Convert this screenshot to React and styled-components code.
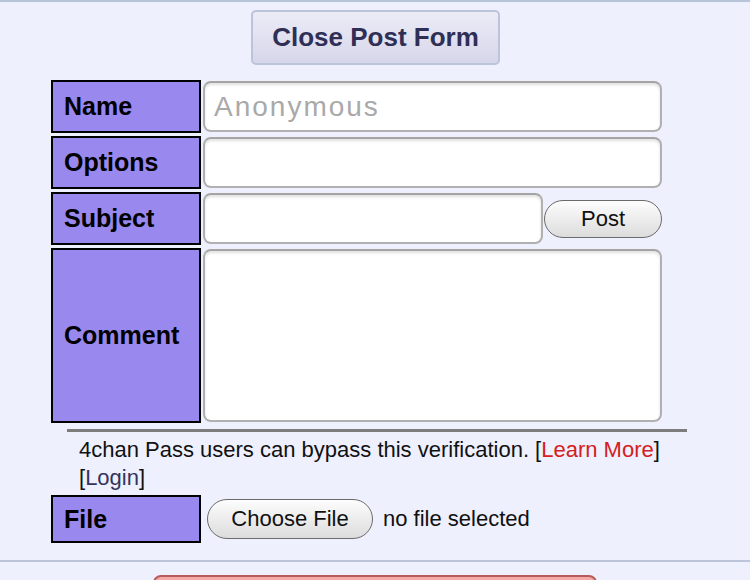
import React from 'react'
import styled, { createGlobalStyle } from 'styled-components'

const Global = createGlobalStyle`
    html, body {
        margin: 0;
        padding: 0;
        background: #eef0fd;
        font-family: "Liberation Sans", Arial, sans-serif;
    }
`;

const Page = styled.div`
    width: 750px;
    height: 580px;
    overflow: hidden;
    border-top: 2px solid #b7c5d9;
    box-sizing: border-box;
    background: #eef0fd;
`;

const Top = styled.div`
    display: flex;
    justify-content: center;
    padding: 8px 0 15px 0;
`;

const ToggleButton = styled.button`
    width: 249px;
    height: 55px;
    font-family: inherit;
    font-size: 26px;
    font-weight: bold;
    color: #2f2f55;
    border: 2px solid #bcc4da;
    border-radius: 5px;
    background: linear-gradient(#ececf7, #d6d6ea);
    margin-left: 1px;
    padding: 0;
`;

const FormGrid = styled.div`
    display: grid;
    grid-template-columns: 150px 459px;
    row-gap: 3px;
    column-gap: 2px;
    margin-left: 51px;
`;

const Label = styled.div`
    box-sizing: border-box;
    height: ${p => p.h}px;
    width: 150px;
    border: 2px solid #000;
    background: #9988ee;
    display: flex;
    align-items: center;
    padding-left: 11px;
    font-size: 25px;
    font-weight: bold;
    color: #000;
`;

const Field = styled.div`
    display: flex;
    align-items: center;
    gap: 1px;
`;

const TextInput = styled.input`
    box-sizing: border-box;
    width: ${p => p.w || 459}px;
    height: ${p => p.h || 51}px;
    border: 2px solid #b0b0b0;
    border-top-color: #a4a4a4;
    border-radius: 8px;
    background: #fff;
    box-shadow: inset 0 2px 3px rgba(0,0,0,0.12);
    font-family: inherit;
    font-size: 28px;
    letter-spacing: 2px;
    padding: 0 9px;
    outline: none;
    &::placeholder {
        color: #a9a9a9;
    }
`;

const TextArea = styled.textarea`
    box-sizing: border-box;
    width: 459px;
    height: 173px;
    border: 2px solid #b0b0b0;
    border-top-color: #a4a4a4;
    border-radius: 8px;
    background: #fff;
    box-shadow: inset 0 2px 3px rgba(0,0,0,0.12);
    resize: none;
    outline: none;
`;

const PillButton = styled.button`
    box-sizing: border-box;
    width: ${p => p.w}px;
    height: ${p => p.h}px;
    border: 1.5px solid #6a6a6a;
    border-radius: 20px;
    background: linear-gradient(#fdfdfd, #dcdcdc);
    font-family: inherit;
    font-size: 22px;
    color: #111;
    padding: 0;
`;

const Verify = styled.div`
    margin: 6px 63px 0 67px;
    border-top: 3px solid #7d7d7d;
    padding: 4px 0 0 12px;
    font-size: 22px;
    line-height: 28px;
    color: #111;
`;

const Link = styled.a`
    color: ${p => p.red ? '#d42020' : '#34345c'};
    text-decoration: none;
`;

const FileRow = styled.div`
    display: flex;
    align-items: center;
    margin: 3px 0 0 51px;
`;

const FileField = styled.div`
    display: flex;
    align-items: center;
    gap: 10px;
    margin-left: 6px;
    font-size: 22px;
    color: #111;
`;

const Rule = styled.hr`
    border: none;
    border-top: 2px solid #bcc4da;
    margin: 17px 0 0 0;
`;

const SubmitBar = styled.div`
    margin: 13px 0 0 153px;
    width: 444px;
    height: 50px;
    box-sizing: border-box;
    border: 2px solid #b85a5a;
    border-radius: 8px;
    background: #f5aaaa;
`;

export default function App() {
    return (
        <Page>
            <Global />
            <Top>
                <ToggleButton>Close Post Form</ToggleButton>
            </Top>
            <FormGrid>
                <Label h={53}>Name</Label>
                <Field><TextInput placeholder="Anonymous" /></Field>
                <Label h={53}>Options</Label>
                <Field><TextInput /></Field>
                <Label h={53}>Subject</Label>
                <Field>
                    <TextInput w={340} />
                    <PillButton w={120} h={38}>Post</PillButton>
                </Field>
                <Label h={175}>Comment</Label>
                <Field><TextArea /></Field>
            </FormGrid>
            <Verify>
                4chan Pass users can bypass this verification. [<Link red>Learn More</Link>]
                <br />
                [<Link>Login</Link>]
            </Verify>
            <FileRow>
                <Label h={48}>File</Label>
                <FileField>
                    <PillButton w={166} h={40}>Choose File</PillButton>
                    no file selected
                </FileField>
            </FileRow>
            <Rule />
            <SubmitBar />
        </Page>
    )
}
